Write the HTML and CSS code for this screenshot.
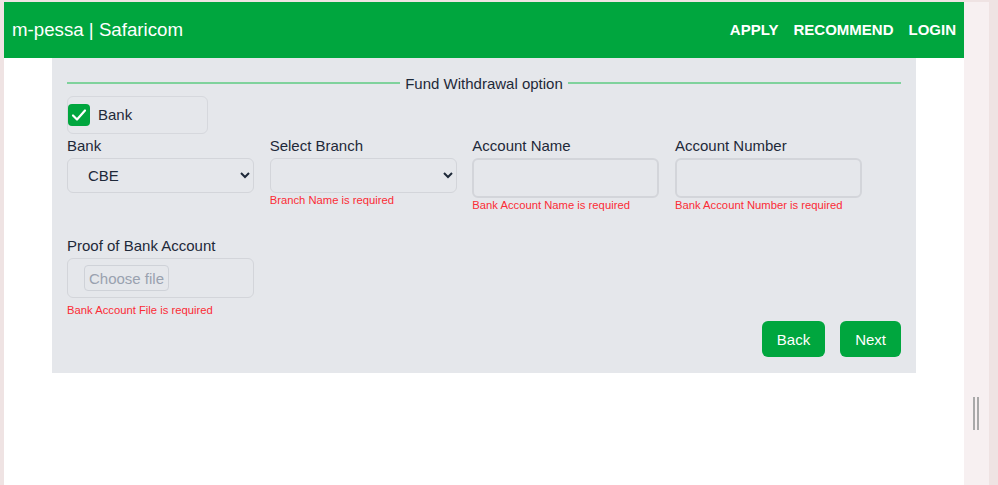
FILE: index.html
```html
<!DOCTYPE html>
<html lang="en">
<head>
<meta charset="utf-8">
<title>m-pessa | Safaricom</title>
<link rel="stylesheet" href="styles.css">
</head>
<body>
<div class="frame">
  <div class="main">
    <header class="topbar">
      <div class="brand">m-pessa | Safaricom</div>
      <nav class="nav">
        <a href="#">APPLY</a>
        <a href="#">RECOMMEND</a>
        <a href="#">LOGIN</a>
      </nav>
    </header>
    <section class="panel">
      <div class="legend"><span>Fund Withdrawal option</span></div>
      <label class="option">
        <span class="check">
          <svg width="22" height="22" viewBox="0 0 22 22"><path d="M5 11.5 L9 15.5 L17 6.5" fill="none" stroke="#fff" stroke-width="2.2" stroke-linecap="round" stroke-linejoin="round"/></svg>
        </span>
        <span>Bank</span>
      </label>
      <div class="grid">
        <div class="field">
          <div class="label">Bank</div>
          <select class="select"><option>CBE</option></select>
        </div>
        <div class="field">
          <div class="label">Select Branch</div>
          <select class="select"><option></option></select>
          <div class="error">Branch Name is required</div>
        </div>
        <div class="field">
          <div class="label">Account Name</div>
          <input class="input" type="text">
          <div class="error">Bank Account Name is required</div>
        </div>
        <div class="field">
          <div class="label">Account Number</div>
          <input class="input" type="text">
          <div class="error">Bank Account Number is required</div>
        </div>
        <div class="field">
          <div class="label">Proof of Bank Account</div>
          <div class="file"><span class="file-btn">Choose file</span></div>
          <div class="error error-file">Bank Account File is required</div>
        </div>
      </div>
      <div class="actions">
        <button class="btn">Back</button>
        <button class="btn">Next</button>
      </div>
    </section>
  </div>
  <div class="side">
    <div class="grip"><span></span><span></span></div>
  </div>
</div>
</body>
</html>
```

FILE: styles.css
```css
* { box-sizing: border-box; }
html, body { margin: 0; height: 100%; }
body {
  background: #efe3e3;
  font-family: "Liberation Sans", Arial, sans-serif;
  color: #1e2939;
  overflow: hidden;
}
.frame {
  display: flex;
  margin: 2px 9px 0 4px;
  height: calc(100% - 2px);
}
.main {
  width: 960px;
  background: #fff;
}
.side {
  flex: 1;
  background: #f7f0f1;
  position: relative;
}
.grip {
  position: absolute;
  left: 9px;
  top: 395px;
  display: flex;
  gap: 2px;
}
.grip span {
  width: 2px;
  height: 33px;
  background: #a9a9a9;
}
.topbar {
  height: 56px;
  background: #00a63e;
  display: flex;
  align-items: center;
  justify-content: space-between;
  padding: 0 8px;
  color: #fff;
}
.brand { font-size: 18.7px; }
.nav { display: flex; gap: 15px; margin-top: -1px; }
.nav a {
  color: #fff;
  text-decoration: none;
  font-weight: bold;
  font-size: 15px;
}
.panel {
  width: 864px;
  margin: 0 auto;
  background: #e5e7eb;
  padding: 16px 15px 16px;
}
.legend {
  display: flex;
  align-items: center;
  height: 18px;
  font-size: 15px;
}
.legend::before, .legend::after {
  content: "";
  flex: 1;
  border-top: 2px solid #7fd29c;
}
.legend span { padding: 0 5px; }
.option {
  margin-top: 4px;
  width: 141px;
  height: 38px;
  border: 1px solid #d6d8dd;
  border-radius: 6px;
  display: flex;
  align-items: center;
  gap: 8px;
  font-size: 15px;
  padding-bottom: 1px;
}
.check {
  width: 22px;
  height: 22px;
  background: #00a63e;
  border-radius: 4px;
  display: flex;
  margin-top: 1px;
}
.grid {
  margin-top: 3px;
  display: grid;
  grid-template-columns: repeat(4, 187px);
  column-gap: 15.67px;
  row-gap: 26px;
  align-items: start;
}
.field { display: flex; flex-direction: column; }
.label {
  font-size: 15px;
  line-height: 18px;
  margin-bottom: 3px;
}
.select {
  height: 35px;
  font: 15px "Liberation Sans", Arial, sans-serif;
  color: #1e2939;
  background: #e5e7eb;
  border: 1px solid #d3d5da;
  border-radius: 6px;
  padding: 0 4px 0 16px;
}
.input {
  height: 40px;
  background: #e5e7eb;
  border: 2px solid #d3d5da;
  border-radius: 6px;
}
.error {
  color: #fb2c36;
  font-size: 11.25px;
  line-height: 12px;
  margin-top: 1px;
}
.error-file { margin-top: 6px; }
.file {
  height: 40px;
  border: 1px solid #d3d5da;
  border-radius: 6px;
  display: flex;
  align-items: center;
  padding-left: 16px;
}
.file-btn {
  height: 26px;
  padding: 0 4px;
  border: 1px solid #cfd2d8;
  border-radius: 4px;
  color: #99a1af;
  font-size: 15px;
  display: flex;
  align-items: center;
}
.actions {
  margin-top: 5px;
  display: flex;
  justify-content: flex-end;
  gap: 15px;
}
.btn {
  height: 36px;
  padding: 0 15px;
  background: #00a63e;
  color: #fff;
  border: 0;
  border-radius: 6px;
  font: 15px "Liberation Sans", Arial, sans-serif;
}
```
